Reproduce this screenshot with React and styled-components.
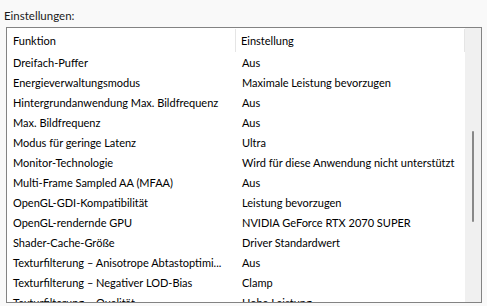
import React from "react";
import styled, { createGlobalStyle } from "styled-components";

const Global = createGlobalStyle`
  html, body { margin: 0; padding: 0; background: #f9f9f9; }
  body { font-family: "Lato", "Liberation Sans", sans-serif; }
`;

const Page = styled.div`
  width: 487px;
  height: 306px;
  padding: 6px 0 0 6px;
  box-sizing: border-box;
  overflow: hidden;
`;

const Caption = styled.div`
  font-size: 11.5px;
  color: #1a1a1a;
  line-height: 20px;
  margin-left: -2px;
  height: 21px;
`;

const Box = styled.div`
  width: 476px;
  height: 276px;
  box-sizing: border-box;
  border: 1px solid #838383;
  background: #fff;
  display: flex;
  overflow: hidden;
`;

const ListArea = styled.div`
  flex: 1;
  display: flex;
  flex-direction: column;
  overflow: hidden;
`;

const Header = styled.div`
  display: grid;
  grid-template-columns: 229px 1fr;
  height: 25px;
  flex-shrink: 0;
`;

const HeaderCell = styled.div`
  font-size: 11px;
  color: #000;
  padding-left: ${(p) => p.$pad}px;
  border-right: 1px solid #e5e5e5;
  margin: 1px 0;
  line-height: 23px;
`;

const Row = styled.div`
  display: grid;
  grid-template-columns: 229px 1fr;
  height: 20px;
  flex-shrink: 0;
  font-size: 11px;
  line-height: 20px;
  color: #000;
`;

const Cell = styled.div`
  padding-left: ${(p) => p.$pad}px;
  padding-right: 4px;
  white-space: nowrap;
  overflow: hidden;
`;

const Scrollbar = styled.div`
  width: 16px;
  background: #f0f0f0;
  position: relative;
  flex-shrink: 0;
`;

const Thumb = styled.div`
  position: absolute;
  left: 7px;
  top: 103px;
  width: 2px;
  height: 91px;
  background: #888;
  border-radius: 1px;
`;

const rows = [
  ["Dreifach-Puffer", "Aus"],
  ["Energieverwaltungsmodus", "Maximale Leistung bevorzugen"],
  ["Hintergrundanwendung Max. Bildfrequenz", "Aus"],
  ["Max. Bildfrequenz", "Aus"],
  ["Modus für geringe Latenz", "Ultra"],
  ["Monitor-Technologie", "Wird für diese Anwendung nicht unterstützt"],
  ["Multi-Frame Sampled AA (MFAA)", "Aus"],
  ["OpenGL-GDI-Kompatibilität", "Leistung bevorzugen"],
  ["OpenGL-rendernde GPU", "NVIDIA GeForce RTX 2070 SUPER"],
  ["Shader-Cache-Größe", "Driver Standardwert"],
  ["Texturfilterung – Anisotrope Abtastoptimi...", "Aus"],
  ["Texturfilterung – Negativer LOD-Bias", "Clamp"],
  ["Texturfilterung – Qualität", "Hohe Leistung"],
];

export default function App() {
  return (
    <Page>
      <Global />
      <Caption>Einstellungen:</Caption>
      <Box>
        <ListArea>
          <Header>
            <HeaderCell $pad={6}>Funktion</HeaderCell>
            <HeaderCell $pad={5}>Einstellung</HeaderCell>
          </Header>
          {rows.map(([a, b]) => (
            <Row key={a}>
              <Cell $pad={6}>{a}</Cell>
              <Cell $pad={6}>{b}</Cell>
            </Row>
          ))}
        </ListArea>
        <Scrollbar>
          <Thumb />
        </Scrollbar>
      </Box>
    </Page>
  );
}
